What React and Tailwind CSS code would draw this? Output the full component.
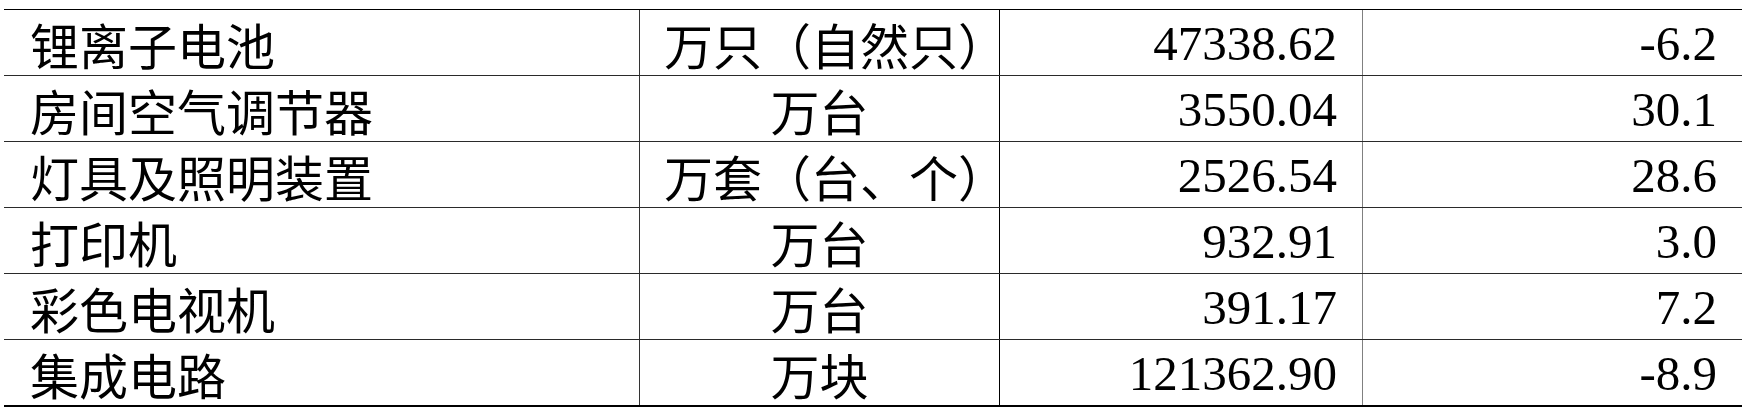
import React from 'react';

const rows = [
  { name: '锂离子电池', unit: '万只（自然只）', output: '47338.62', growth: '-6.2' },
  { name: '房间空气调节器', unit: '万台', output: '3550.04', growth: '30.1' },
  { name: '灯具及照明装置', unit: '万套（台、个）', output: '2526.54', growth: '28.6' },
  { name: '打印机', unit: '万台', output: '932.91', growth: '3.0' },
  { name: '彩色电视机', unit: '万台', output: '391.17', growth: '7.2' },
  { name: '集成电路', unit: '万块', output: '121362.90', growth: '-8.9' }
];

const App = () => {
  return (
    <div className="min-h-[407px] w-[1751px] bg-white pt-[9px] pl-[4px] text-black font-[family-name:Noto_Sans_CJK_SC,sans-serif]">
      <div className="w-[1738px] border-t border-black">
        {rows.map((r, i) => {
          const last = i === rows.length - 1;
          const wide = r.unit.length > 2;
          return (
            <div
              key={r.name}
              className={
                last
                  ? 'flex h-[67px] border-b-2 border-black'
                  : 'flex h-[66px] border-b border-[#2a2a2a]'
              }
            >
              {/* name */}
              <div className="flex w-[635px] items-center pl-[26px] pt-[2px] text-[49px] leading-none">
                {r.name}
              </div>
              {/* unit */}
              <div
                className={
                  wide
                    ? 'flex w-[360px] items-center justify-center border-l border-[#333] pl-[24px] pt-[2px] text-[49px] leading-none'
                    : 'flex w-[360px] items-center justify-center border-l border-[#333] pt-[2px] text-[49px] leading-none'
                }
              >
                {r.unit}
              </div>
              {/* output */}
              <div className="flex w-[363px] items-center justify-end border-l border-black pr-[25px] pt-[2px] text-[49px] leading-none font-[family-name:Liberation_Serif,serif]">
                {r.output}
              </div>
              {/* growth */}
              <div className="flex flex-1 items-center justify-end border-l border-[#808080] pr-[25px] pt-[2px] text-[49px] leading-none font-[family-name:Liberation_Serif,serif]">
                {r.growth}
              </div>
            </div>
          );
        })}
      </div>
    </div>
  );
};

export default App;
